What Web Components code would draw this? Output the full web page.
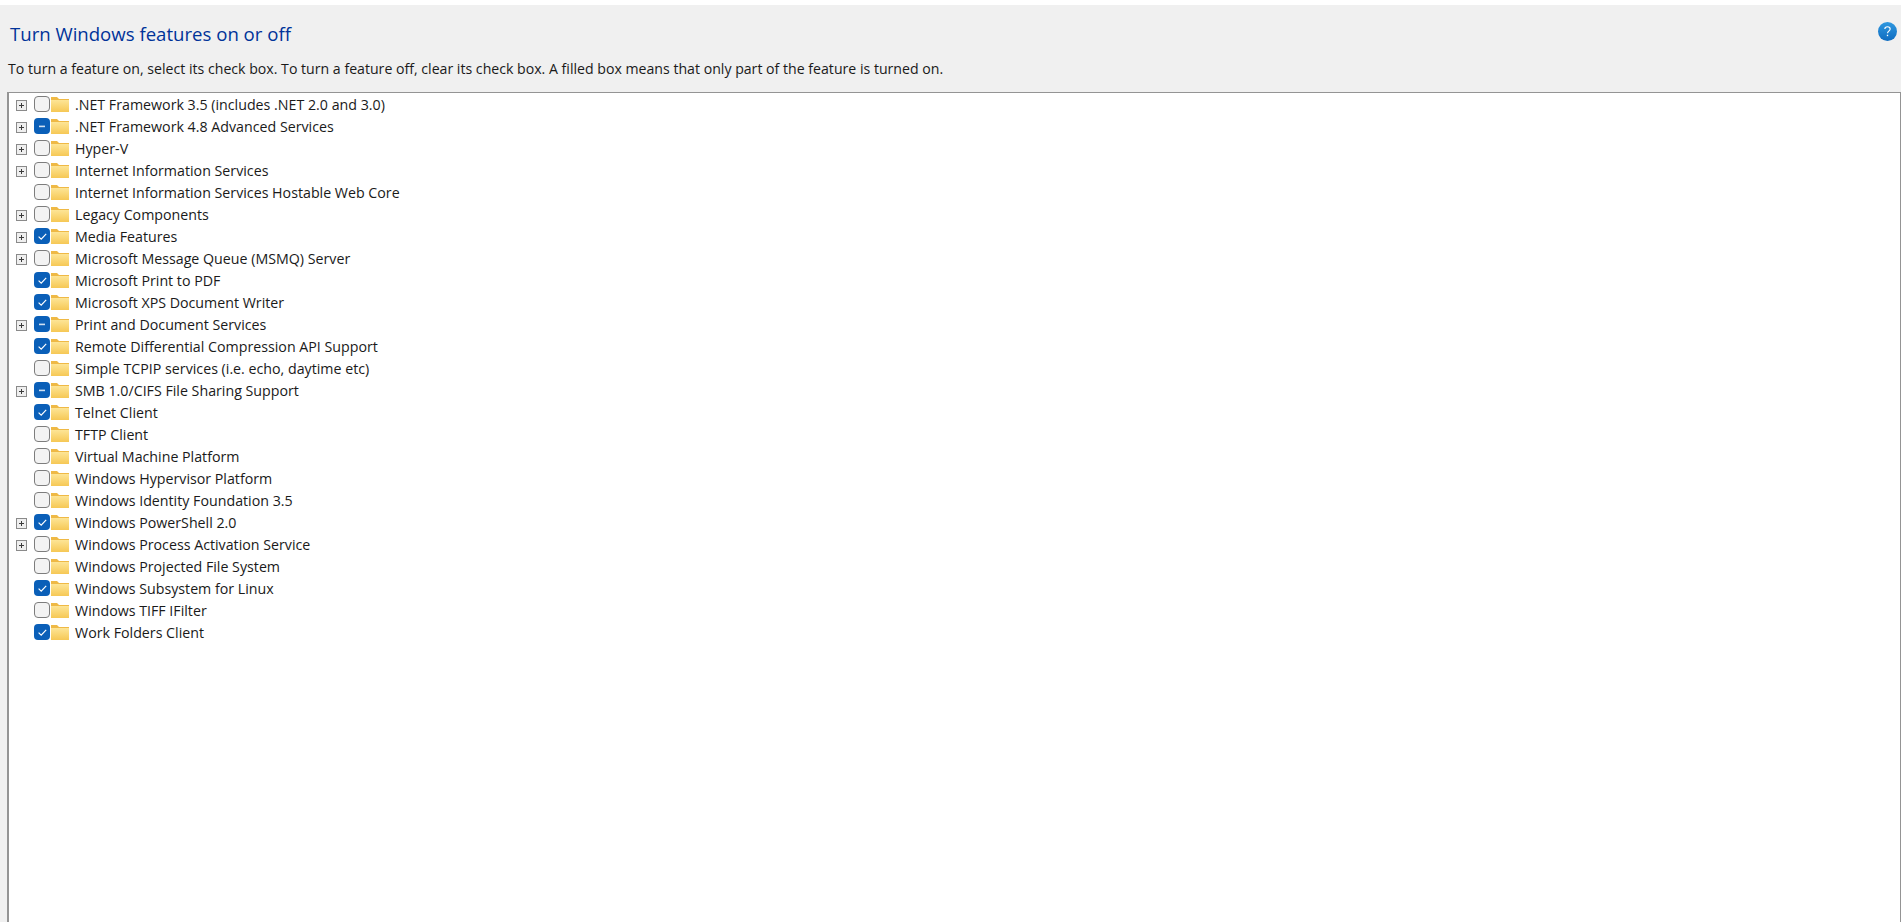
<!DOCTYPE html>
<html><head><meta charset="utf-8"><style>
html,body{margin:0;height:100%;background:#fff;overflow:hidden}
body{font-family:"Open Sans","Noto Sans",sans-serif}
</style></head><body>
<features-dialog>
<feature-row exp state="off">.NET Framework 3.5 (includes .NET 2.0 and 3.0)</feature-row>
<feature-row exp state="mixed">.NET Framework 4.8 Advanced Services</feature-row>
<feature-row exp state="off">Hyper-V</feature-row>
<feature-row exp state="off">Internet Information Services</feature-row>
<feature-row state="off">Internet Information Services Hostable Web Core</feature-row>
<feature-row exp state="off">Legacy Components</feature-row>
<feature-row exp state="on">Media Features</feature-row>
<feature-row exp state="off">Microsoft Message Queue (MSMQ) Server</feature-row>
<feature-row state="on">Microsoft Print to PDF</feature-row>
<feature-row state="on">Microsoft XPS Document Writer</feature-row>
<feature-row exp state="mixed">Print and Document Services</feature-row>
<feature-row state="on">Remote Differential Compression API Support</feature-row>
<feature-row state="off">Simple TCPIP services (i.e. echo, daytime etc)</feature-row>
<feature-row exp state="mixed">SMB 1.0/CIFS File Sharing Support</feature-row>
<feature-row state="on">Telnet Client</feature-row>
<feature-row state="off">TFTP Client</feature-row>
<feature-row state="off">Virtual Machine Platform</feature-row>
<feature-row state="off">Windows Hypervisor Platform</feature-row>
<feature-row state="off">Windows Identity Foundation 3.5</feature-row>
<feature-row exp state="on">Windows PowerShell 2.0</feature-row>
<feature-row exp state="off">Windows Process Activation Service</feature-row>
<feature-row state="off">Windows Projected File System</feature-row>
<feature-row state="on">Windows Subsystem for Linux</feature-row>
<feature-row state="off">Windows TIFF IFilter</feature-row>
<feature-row state="on">Work Folders Client</feature-row>
</features-dialog>
<script>
class FeaturesDialog extends HTMLElement{
  constructor(){super();this.attachShadow({mode:'open'}).innerHTML=`<style>
  :host{display:flex;flex-direction:column;height:100vh;box-sizing:border-box;padding-top:5px}
  .head{background:#f0f0f0;flex:1;display:flex;flex-direction:column;padding:0 0 0 7px;min-height:0}
  .top{display:flex;justify-content:space-between;align-items:flex-start;padding:16px 4px 0 3px;height:26px}
  .top svg{margin-top:1px}
  h1{margin:0;font-weight:400;font-size:18.6px;line-height:26px;color:#003399}
  p{margin:12px 0 0 1px;font-size:14.13px;line-height:20px;color:#1a1a1a;height:33px}
  .list{flex:1;background:#fff;border:1px solid #949494;border-bottom:0;border-left-width:2px;padding:0 0 0 7px;min-height:0;box-sizing:border-box}
  svg{display:block}
  </style>
  <div class="head">
   <div class="top"><h1>Turn Windows features on or off</h1>
   <svg width="19" height="19" viewBox="0 0 20 20"><defs><linearGradient id="g" x1="0" y1="0" x2="0" y2="1"><stop offset="0" stop-color="#2f98e0"/><stop offset="1" stop-color="#0f6cc0"/></linearGradient></defs><circle cx="10" cy="10" r="10" fill="url(#g)"/><path d="M7.2 7.4C7.2 5.8 8.5 5 10 5s2.8.9 2.8 2.4c0 2.2-2.8 2.2-2.8 4.5" fill="none" stroke="#fff" stroke-width="1.2"/><rect x="9.3" y="13.4" width="1.4" height="1.5" fill="#fff"/></svg></div>
   <p>To turn a feature on, select its check box. To turn a feature off, clear its check box. A filled box means that only part of the feature is turned on.</p>
   <div class="list"><slot></slot></div>
  </div>`;}
}
class FeatureRow extends HTMLElement{
  constructor(){super();
   const s=this.attachShadow({mode:'open'});
   const st=this.getAttribute('state'),exp=this.hasAttribute('exp');
   const mark=st==='on'?'<path d="M4.6 8.6l2.6 2.6 5-5.4" fill="none" stroke="#fff" stroke-width="1.2"/>':st==='mixed'?'<rect x="5" y="7.6" width="6" height="1.6" fill="#cfe0f2"/>':'';
   const box=st==='off'?'<rect x=".5" y=".5" width="15" height="15" rx="3.5" fill="#f3f3f3" stroke="#7d7d7d"/>':'<rect x="0" y="0" width="16" height="16" rx="4" fill="#0a5fb8"/>';
   s.innerHTML=`<style>
   :host{display:flex;align-items:center;height:22px;font-size:14.22px;color:#1a1a1a}
   svg{display:block;flex:none}
   .exp{width:13px;height:14px;margin-right:5px;flex:none;visibility:${exp?'visible':'hidden'}}
   .cb{margin-right:1px}
   .fd{margin-right:6px}
   </style>
   <svg class="exp" viewBox="0 0 13 14"><rect x=".5" y="3.5" width="10" height="10" fill="#efefef" stroke="#8a8a8a"/><path d="M3 8.5h5M5.5 6v5" stroke="#3c3c3c" stroke-width="1"/></svg>
   <svg class="cb" width="16" height="16" viewBox="0 0 16 16">${box}${mark}</svg>
   <svg class="fd" width="18" height="15" viewBox="0 0 18 15"><defs><linearGradient id="f" x1="0" y1="0" x2="0" y2="1"><stop offset="0" stop-color="#fde596"/><stop offset="1" stop-color="#f6c855"/></linearGradient></defs><path d="M0 0h6l2 2h10v13H0z" fill="#efb945"/><path d="M0 3h18v12H0z" fill="url(#f)"/></svg>
   <span><slot></slot></span>`;}
}
customElements.define('features-dialog',FeaturesDialog);
customElements.define('feature-row',FeatureRow);
</script></body></html>
